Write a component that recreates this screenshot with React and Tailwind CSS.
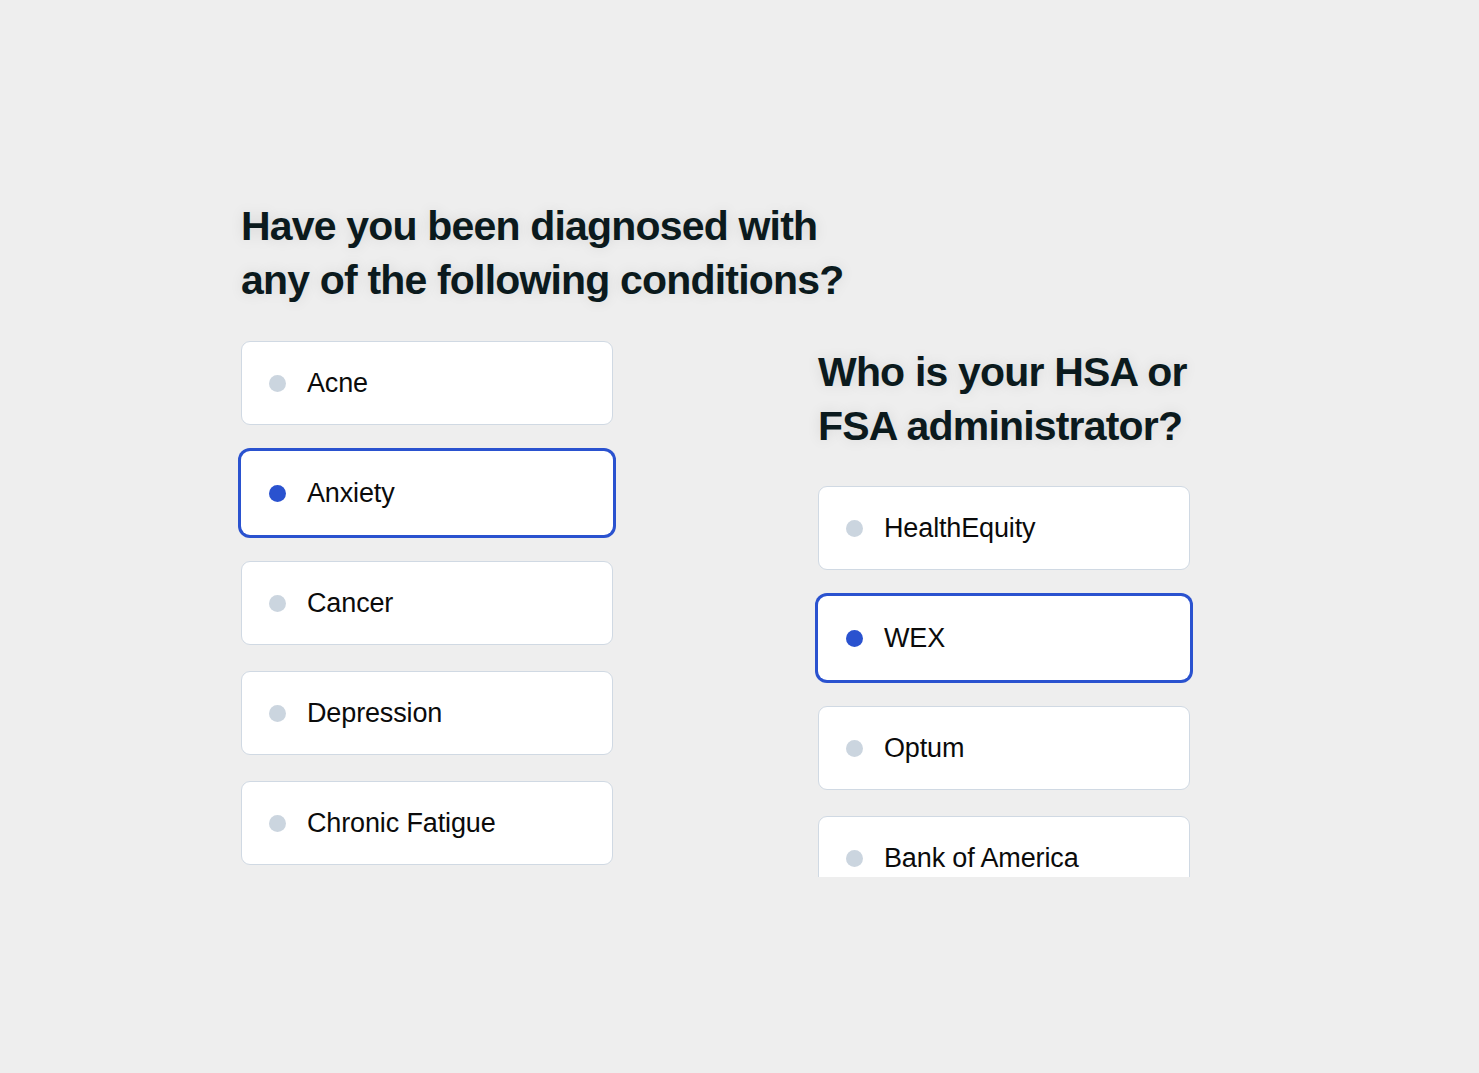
import React from 'react';

const conditions = [
  { label: 'Acne' },
  { label: 'Anxiety', selected: true },
  { label: 'Cancer' },
  { label: 'Depression' },
  { label: 'Chronic Fatigue' },
];

const administrators = [
  { label: 'HealthEquity' },
  { label: 'WEX', selected: true },
  { label: 'Optum' },
  { label: 'Bank of America' },
];

function Option({ label, selected = false }) {
  return (
    <div
      className={`h-[84px] shrink-0 rounded-[9px] bg-white flex items-center pl-[27px] gap-[21px] border ${
        selected
          ? 'border-transparent shadow-[0_0_0_3px_#2a52cf]'
          : 'border-[#d0d9e3]'
      }`}
    >
      <span
        className={`w-[17px] h-[17px] rounded-full ${selected ? 'bg-[#2a52cf]' : 'bg-[#cbd5df]'}`}
      />
      <span className="text-[27px] text-[#0b0b0b] tracking-[-0.005em] leading-none">{label}</span>
    </div>
  );
}

function Heading({ children }) {
  return (
    <h2 className="text-[41px] font-bold leading-[54px] tracking-[-0.02em] text-[#0b1a1d] [text-shadow:0_0_14px_rgba(0,0,0,0.1)]">
      {children}
    </h2>
  );
}

export default function App() {
  return (
    <div className="h-[1073px] w-full bg-[#eeeeee] pl-[241px] pt-[199px] font-['Liberation_Sans',Arial,sans-serif]">
      <div className="flex gap-[205px]">
        {/* Conditions */}
        <div className="w-[372px] shrink-0">
          <div className="w-[660px]">
            <Heading>
              Have you been diagnosed with
              <br />
              any of the following conditions?
            </Heading>
          </div>
          <div className="mt-[34px] flex flex-col gap-[26px]">
            {conditions.map(c => (
              <Option key={c.label} {...c} />
            ))}
          </div>
        </div>

        {/* Administrators */}
        <div className="w-[372px] shrink-0 pt-[146px]">
          <div className="w-[420px]">
            <Heading>
              Who is your HSA or
              <br />
              FSA administrator?
            </Heading>
          </div>
          <div className="mt-[29px] -mx-1 p-1 pb-0 h-[395px] overflow-hidden">
            <div className="flex flex-col gap-[26px]">
              {administrators.map(a => (
                <Option key={a.label} {...a} />
              ))}
            </div>
          </div>
        </div>
      </div>
    </div>
  );
}
